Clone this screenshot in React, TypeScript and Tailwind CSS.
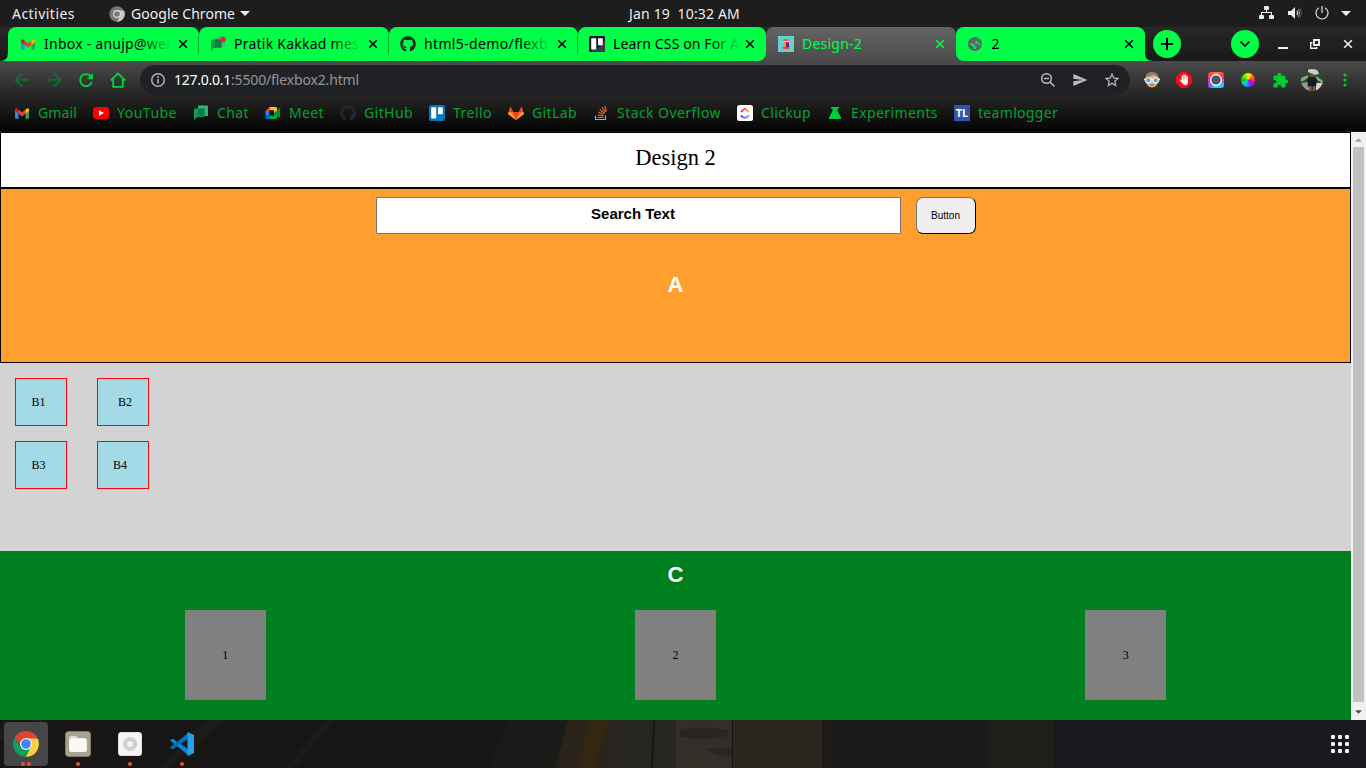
import { useLayoutEffect, useRef, useState, type ReactNode } from 'react';
import { FaGithub } from 'react-icons/fa';
import { MdExtension, MdSend, MdStarBorder } from 'react-icons/md';

/* Text tracked to occupy a given width. */
function Fit({ width, className = '', children }: { width: number; className?: string; children: string }) {
  const ref = useRef<HTMLSpanElement>(null);
  const [spacing, setSpacing] = useState(0);
  useLayoutEffect(() => {
    if (ref.current) {
      const natural = ref.current.getBoundingClientRect().width;
      setSpacing((width - natural) / children.length);
    }
  }, [width, children]);
  return (
    <span ref={ref} className={`inline-block whitespace-pre ${className}`} style={{ letterSpacing: `${spacing}px` }}>
      {children}
    </span>
  );
}

function GmailIcon() {
  return (
    <svg viewBox="0 0 16 16" className="h-4 w-4 shrink-0">
      <path d="M1 4.500v8q0 1.300 1.200 1.300h2.300V6z" fill="#2d8cf0" />
      <path d="M15 4.500v8q0 1.300-1.200 1.300h-2.300V6z" fill="#2ba84f" />
      <path d="M4.300 4.500L8 7.300l3.700-2.800v4L8 11.400 4.300 8.500z" fill="#ea3d34" />
      <path d="M11.500 4.600l1-.8Q15 2.300 15 4.800v1.300l-3.500 2.700z" fill="#fbbc04" />
      <path d="M4.500 4.600l-1-.8Q1 2.300 1 4.800v1.300l3.500 2.700z" fill="#c5221f" />
    </svg>
  );
}
function ChatIcon({ dot = false }: { dot?: boolean }) {
  return (
    <svg viewBox="0 0 16 16" className="h-4 w-4 shrink-0 overflow-visible">
      <path d="M5 .5h9q1 0 1 1v9.500H5z" fill={dot ? '#35c96a' : '#2fb574'} />
      <path d="M2 3.500h9.500V12H4l-3 3.500V4.500q0-1 1-1z" fill="#0b9d58" />
      <path d="M5 3.500h6.500V11H5z" fill="#087d42" />
      {dot && <circle cx="13" cy="3.500" r="2.800" fill="#f51b36" />}
    </svg>
  );
}
function MeetIcon() {
  return (
    <svg viewBox="0 0 16 16" className="h-4 w-4 shrink-0">
      <path d="M.5 6h4v4h-4z" fill="#2684fc" />
      <path d="M.5 10h4v4h-3q-1 0-1-1z" fill="#0066da" />
      <path d="M4.500 2v4h-4z" fill="#ea4335" />
      <path d="M4.500 2H11q1 0 1 1v5H9V5.500H4.500z" fill="#ffba1a" />
      <path d="M4.500 10.500H9V8h3v5q0 1-1 1H4.500z" fill="#00ac47" />
      <path d="M9 8l5-4.500q1.200-.6 1.200.500v8q0 1-1.200.500z" fill="#00932d" />
      <path d="M4.500 5.500H9v5H4.500z" fill="#101010" />
    </svg>
  );
}
function TrelloIcon({ dark = false }: { dark?: boolean }) {
  return (
    <svg viewBox="0 0 16 16" className="h-4 w-4 shrink-0">
      <rect width="16" height="16" rx={dark ? 1 : 2} fill={dark ? '#15192d' : '#0079bf'} />
      {dark && <path d="M9 12l3-3 4-5v12H3v-3z" fill="#3b3c43" />}
      <rect x="2.200" y="2.200" width="5" height="11.300" rx=".8" fill="#fff" />
      <rect x="9" y="2.200" width="4.800" height="7" rx=".8" fill="#fff" />
    </svg>
  );
}
function GitLabIcon() {
  return (
    <svg viewBox="0 0 16 16" className="h-4 w-4 shrink-0">
      <path d="M0 9l2.500-7.500L5 7h6l2.500-5.500L16 9l-8 6z" fill="#fc6d26" />
      <path d="M5 7h6l-3 8z" fill="#e24329" />
      <path d="M0 9l1.200-3L8 15zM16 9l-1.200-3L8 15z" fill="#fca326" />
      <path d="M2.500 1.500L5 7H.8zM13.500 1.500L11 7h4.200z" fill="#e24329" />
    </svg>
  );
}
function StackIcon() {
  return (
    <svg viewBox="0 0 16 16" className="h-4 w-4 shrink-0" fill="none" strokeWidth="1.200">
      <path d="M2.500 10.500v4h10v-4" stroke="#a5a7aa" />
      <path d="M4.500 12.500h6M4.600 10l6 .9M5.300 7.300l5.700 2M6.700 4.400l5 3.500M9 2l3.500 5M12 .8l1.300 5.500" stroke="#e8701f" />
    </svg>
  );
}
function ClickupIcon() {
  return (
    <svg viewBox="0 0 16 16" className="h-4 w-4 shrink-0" fill="none">
      <defs>
        <linearGradient id="cuA"><stop stopColor="#ff02f0" /><stop offset="1" stopColor="#ffc800" /></linearGradient>
        <linearGradient id="cuB"><stop stopColor="#8930fd" /><stop offset="1" stopColor="#49ccf9" /></linearGradient>
      </defs>
      <rect width="16" height="16" rx="2.500" fill="#fff" />
      <path d="M4 7l4-3.500L12 7" stroke="url(#cuA)" strokeWidth="2" />
      <path d="M3.700 10.300q4.300 5 8.600 0" stroke="url(#cuB)" strokeWidth="2" />
    </svg>
  );
}
function DesignIcon() {
  return (
    <svg viewBox="0 0 16 16" className="h-4 w-4 shrink-0">
      <path d="M0 0h16v16H0z" fill="#65d2c9" />
      <path d="M5 3h6v2H5z" fill="#f45b69" />
      <path d="M5 5h3v1H5z" fill="#ffc2b4" /><path d="M8 5h3v1H8z" fill="#ffdcc4" />
      <path d="M5 6h3v5H5z" fill="#ff8c42" /><path d="M8 6h3v2H8z" fill="#b8216c" /><path d="M8 8h3v3H8z" fill="#73166c" />
      <path d="M5 11h6v2H5z" fill="#e63d63" />
    </svg>
  );
}
function GlobeIcon() {
  return (
    <svg viewBox="0 0 16 16" className="h-4 w-4 shrink-0">
      <circle cx="7" cy="8" r="7" fill="#5f6368" />
      <path d="M2.300 7.200h2.500l2.200 2v1.300h1.800l-1 2.300q-1.600.5-2.500-.2V10.500L2.100 8.500zM7.500 2.500l3 .8-.6 1.700-2.200.3-.8 1.900 2.900.6 2.700 2.200.2-2.200-2-.6-1.200-1.300 1-1.500-1.500-2z" fill="#00f045" />
    </svg>
  );
}
function Cross({ className = '' }: { className?: string }) {
  return (
    <svg viewBox="0 0 10 10" className={`h-2.5 w-2.5 shrink-0 ${className}`} fill="none" stroke="currentColor" strokeWidth="1.600">
      <path d="M1.200 1.200l7.600 7.600M8.800 1.200l-7.600 7.600" />
    </svg>
  );
}

interface TabProps { icon: ReactNode; title: string; width: number; box: string; sep?: boolean; shape?: string; pad?: string; children?: ReactNode }
function Tab({ icon, title, width, box, sep, shape = 'rounded-t-lg', pad = 'pl-3', children }: TabProps) {
  return (
    <div className={`relative flex h-[34px] shrink-0 ${box}`}>
      {children}
      <div className={`relative flex w-full items-center bg-[#00ff47] text-black ${pad} ${shape}`}>
        {icon}
        <div className="relative ml-2 w-[128px] text-[14px] leading-5">
          <Fit width={width}>{title}</Fit>
          {title.length > 3 && <span className="absolute inset-y-0 right-0 w-8 bg-linear-to-r from-transparent to-[#00ff47]" />}
        </div>
        <Cross className="absolute right-[11px]" />
        {sep && <span className="absolute right-0 bottom-[6px] h-[20px] w-px bg-[#06a535]" />}
      </div>
    </div>
  );
}

function Bookmark({ icon, label, width, box }: { icon: ReactNode; label: string; width: number; box: string }) {
  return (
    <div className={`flex shrink-0 items-center gap-2 ${box}`}>
      {icon}
      <Fit width={width}>{label}</Fit>
    </div>
  );
}

function TopBar() {
  return (
    <header className="flex h-[27px] items-center bg-[#1d1d1d] text-[14px] leading-5 text-[#eee]">
      <div className="w-[109px] pl-3"><Fit width={63}>Activities</Fit></div>
      <svg viewBox="0 0 16 16" className="mr-[6px] h-4 w-4">
        <circle cx="8" cy="8" r="7.700" fill="#777" />
        <path d="M8 4.500h7A7.700 7.700 0 0 1 8 15.700L11 10z" fill="#c7c7c7" />
        <circle cx="8" cy="8" r="4" fill="#ddd" /><circle cx="8" cy="8" r="2.800" fill="#777" />
      </svg>
      <Fit width={104}>Google Chrome</Fit>
      <svg viewBox="0 0 10 5" className="ml-[5px] h-[5px] w-[10px]"><path d="M0 0h10L5 5z" fill="#eee" /></svg>
      <div className="ml-[378px] w-[631px] pl-px"><Fit width={111}>{'Jan 19  10:32 AM'}</Fit></div>
      <svg viewBox="0 0 16 14" className="-mt-px h-[14px] w-4 shrink-0" fill="#eee">
        <rect x="5" y="0" width="5" height="4" rx="1" /><rect x="0" y="9" width="5" height="4" rx="1" /><rect x="10" y="9" width="5" height="4" rx="1" />
        <path d="M7 4h1v2h5v3h-1V7H3v2H2V6h5z" />
      </svg>
      <svg viewBox="0 0 16 14" className="ml-[13px] -mt-px h-[14px] w-4 shrink-0" fill="none">
        <path d="M0 5h3l4-4v12L3 9H0z" fill="#eee" />
        <path d="M9 5q1.500 2 0 4" stroke="#ddd" strokeWidth="1.300" /><path d="M10.500 3q2.500 4 0 8" stroke="#999" /><path d="M12 1.500q3 5.500 0 11" stroke="#555" />
      </svg>
      <svg viewBox="0 0 14 14" className="ml-[11px] -mt-px h-[14px] w-[14px] shrink-0" fill="none" stroke="#ddd" strokeWidth="1.200">
        <path d="M4 1.800a6 6 0 1 0 6 0M7 0v7" />
      </svg>
      <svg viewBox="0 0 10 5" className="ml-3 h-[5px] w-[10px] shrink-0"><path d="M0 0h10L5 5z" fill="#eee" /></svg>
    </header>
  );
}

function TabStrip() {
  return (
    <div className="flex h-[34px] items-center bg-linear-to-b from-[#282828] to-[#191919]">
      <svg viewBox="0 0 8 34" className="h-[34px] w-2 shrink-0"><path d="M0 34q8 0 8-8v8z" fill="#00ff47" /></svg>
      <Tab box="w-[191px]" icon={<GmailIcon />} title="Inbox - anujp@wel" width={126} sep />
      <Tab box="w-[190px]" pad="pl-[11px]" icon={<ChatIcon dot />} title="Pratik Kakkad mes" width={125} sep />
      <Tab box="w-[189px]" pad="pl-[11px]" icon={<FaGithub className="h-4 w-4 shrink-0 text-[#24292e]" />} title="html5-demo/flexb" width={124} sep />
      <Tab box="w-[188px]" pad="pl-[11px]" icon={<TrelloIcon dark />} title="Learn CSS on For A" width={126} shape="rounded-t-lg rounded-br-lg">
        <span className="absolute right-0 bottom-0 h-2 w-2 bg-[#4c4c4c]" />
      </Tab>
      <div className="relative flex h-[34px] w-[190px] shrink-0 items-center rounded-t-lg bg-linear-to-b from-[#646464] to-[#4c4c4c] pl-3 text-[14px] text-[#00ff47]">
        <DesignIcon />
        <div className="ml-2 leading-5"><Fit width={60}>Design-2</Fit></div>
        <Cross className="absolute right-[11px]" />
      </div>
      <Tab box="w-[189px]" pad="pl-[11.500px]" icon={<GlobeIcon />} title="2" width={8} shape="rounded-t-lg rounded-bl-lg">
        <span className="absolute bottom-0 left-0 h-2 w-2 bg-[#4c4c4c]" />
      </Tab>
      <svg viewBox="0 0 8 34" className="h-[34px] w-2 shrink-0"><path d="M8 34q-8 0-8-8v8z" fill="#00ff47" /></svg>
      <div className="grid h-7 w-7 shrink-0 place-items-center rounded-full bg-[#00ff47]">
        <svg viewBox="0 0 12 12" className="h-3 w-3" stroke="#000" strokeWidth="2"><path d="M6 0v12M0 6h12" /></svg>
      </div>
      <div className="ml-[50px] grid h-7 w-7 shrink-0 place-items-center rounded-full bg-[#00ff47]">
        <svg viewBox="0 0 10 6" className="h-[6px] w-[10px]" fill="none" stroke="#000" strokeWidth="1.600"><path d="M.6.6L5 5 9.400.6" /></svg>
      </div>
      <span className="mt-[8px] ml-[19px] h-[2px] w-[10px] bg-[#eee]" />
      <svg viewBox="0 0 10 10" className="ml-[22px] h-[10px] w-[10px]" fill="none" stroke="#eee">
        <path d="M4 1h5v5H4z" strokeWidth="1.900" /><path d="M2.500 3.700H.7v5.600h6V8" strokeWidth="1.400" />
      </svg>
      <Cross className="ml-[23px] text-[#f2f2f2]" />
    </div>
  );
}

function Toolbar() {
  return (
    <div className="flex h-[38px] items-center text-[#00d33b]">
      <svg viewBox="0 0 16 16" className="ml-[14px] h-4 w-4 shrink-0" fill="none" stroke="#087b2a" strokeWidth="1.600"><path d="M15 8H2M8 1.500L1.500 8 8 14.500" /></svg>
      <svg viewBox="0 0 16 16" className="ml-4 h-4 w-4 shrink-0" fill="none" stroke="#087b2a" strokeWidth="1.600"><path d="M1 8h13M8 1.500L14.500 8 8 14.500" /></svg>
      <svg viewBox="0 0 16 16" className="ml-4 h-4 w-4 shrink-0" fill="none" stroke="currentColor" strokeWidth="1.900"><path d="M12.500 4A6 6 0 1 0 13.800 10" /><path d="M15 1v6H9z" fill="currentColor" stroke="none" /></svg>
      <svg viewBox="0 0 16 16" className="ml-4 h-4 w-4 shrink-0" fill="none" stroke="currentColor" strokeWidth="1.800"><path d="M.8 8.500L8 1.500l7.200 7M3.200 7v7.800h9.600V7" /></svg>
      <div className="ml-[14px] flex h-[30px] w-[990px] shrink-0 items-center rounded-full bg-[#202124] pr-[9px] pl-[10px]">
        <svg viewBox="0 0 16 16" className="h-4 w-4 shrink-0" fill="none" stroke="#b0b3b8" strokeWidth="1.500"><circle cx="8" cy="8" r="6.300" /><path d="M8 7v4.500M8 4.300v1.600" strokeWidth="1.600" /></svg>
        <div className="ml-2 w-[850px] text-[14px] leading-5">
          <Fit width={57} className="text-white">127.0.0.1</Fit>
          <Fit width={128} className="text-[#92969b]">:5500/flexbox2.html</Fit>
        </div>
        <svg viewBox="0 0 16 16" className="ml-[17px] h-4 w-4 shrink-0" fill="none" stroke="#bcbcbc" strokeWidth="1.500">
          <circle cx="6.500" cy="6.500" r="4.800" /><path d="M10 10l4.500 4.500M4 6.500h5" />
        </svg>
        <MdSend className="ml-4 h-4 w-4 shrink-0 text-[#bcbcbc]" />
        <MdStarBorder className="ml-[15px] h-[18px] w-[18px] shrink-0 text-[#bcbcbc]" />
      </div>
      <svg viewBox="0 0 18 16" className="ml-[13px] h-4 w-[18px] shrink-0">
        <path d="M2.500 8q0-7.500 6.500-7.500T15.500 8l-2 5.500q-4.500 4-9 0z" fill="#ddb18e" /><path d="M2.500 6q0-6 6.500-6t6.500 6l-3-2-3-1-3.500 2z" fill="#a77b57" />
        <circle cx="5.300" cy="8.300" r="2.700" fill="#6c9fae" stroke="#d9f2f4" strokeWidth="1.400" /><circle cx="12.700" cy="8.300" r="2.700" fill="#6c9fae" stroke="#d9f2f4" strokeWidth="1.400" />
        <path d="M1 7.500h1.500M8 7.500h2M15.500 7.500H17" stroke="#e8ffff" strokeWidth="1.400" /><path d="M7 13h4" stroke="#a9614f" />
      </svg>
      <svg viewBox="0 0 16 16" className="ml-[15px] h-4 w-4 shrink-0">
        <path d="M5 0h6l5 5v6l-5 5H5l-5-5V5z" fill="#f40d12" />
        <path d="M4.500 8.300l2 2M6.300 9V4M8 8.500V2.800M9.700 8.500V3.500M11.300 9V5" stroke="#fff" strokeWidth="1.400" strokeLinecap="round" fill="none" /><path d="M5.600 8h6.400v2.500q-.5 2.800-3 2.800-1.800 0-3.400-3.300z" fill="#fff" />
      </svg>
      <div className="ml-4 grid h-4 w-4 shrink-0 place-items-center rounded-[3px] bg-[conic-gradient(#ff8a1c,#ff2d56_60deg,#ff31a2_90deg,#20cfff_130deg,#20cfff_190deg,#8256f0_230deg,#ef28cf_270deg,#ff3d46_310deg,#ff8a1c)]">
        <svg viewBox="0 0 14 14" className="h-[14px] w-[14px]"><circle cx="7" cy="7" r="5.300" fill="#343e4c" stroke="#fff" strokeWidth="1.500" /><circle cx="7" cy="7" r="2.700" fill="#3d5366" stroke="#77899a" strokeWidth=".6" /></svg>
      </div>
      <div className="ml-4 grid h-4 w-4 shrink-0 place-items-center">
        <div className="h-[14px] w-[14px] rounded-full bg-[conic-gradient(#ffe100_0_25deg,#ff8a00_40deg,#ff264a_90deg,#d900e5_110deg,#7422ef_150deg,#00baff_200deg,#00e4a2_235deg,#00ca16_270deg,#7be900_320deg,#ffe100)]" />
      </div>
      <MdExtension className="ml-4 h-[17px] w-[17px] shrink-0 text-[#00cb39]" />
      <svg viewBox="0 0 22 22" className="ml-[12px] h-[22px] w-[22px] shrink-0">
        <defs><clipPath id="face"><circle cx="11" cy="11" r="11" /></clipPath></defs>
        <g clipPath="url(#face)">
          <path d="M0 0h22v22H0z" fill="#2c4b2c" /><path d="M7 0h9l2 5-5 1-6-3z" fill="#c8cdca" /><path d="M0 9l7-3v3l-7 4zM15 7l7 5v3l-7-5z" fill="#8ba578" />
          <path d="M0 14l7-1 2 9H0z" fill="#989a91" /><path d="M15 14h7v8h-7z" fill="#d4d4cc" /><path d="M6 10l3-2h4l3 2-1 8H7z" fill="#151c28" />
          <circle cx="11" cy="6.500" r="2" fill="#694a3b" /><path d="M8 17h2.500v5H8zM12 17h2.500v5H12z" fill="#875548" />
        </g>
      </svg>
      <svg viewBox="0 0 4 14" className="ml-[20px] h-[14px] w-1 shrink-0" fill="#00cb39"><circle cx="2" cy="2" r="1.600" /><circle cx="2" cy="7" r="1.600" /><circle cx="2" cy="12" r="1.600" /></svg>
    </div>
  );
}

function Bookmarks() {
  return (
    <div className="flex h-[28px] items-center pl-[14px] text-[14px] leading-5 text-[#04a230]">
      <Bookmark box="w-[79px]" icon={<GmailIcon />} label="Gmail" width={39} />
      <Bookmark box="w-[100px]" icon={<svg viewBox="0 0 16 16" className="h-4 w-4 shrink-0"><rect y="2" width="16" height="12" rx="3" fill="#f00" /><path d="M6 5.300l5 2.700-5 2.700z" fill="#fff" /></svg>} label="YouTube" width={60} />
      <Bookmark box="w-[72px]" icon={<ChatIcon />} label="Chat" width={32} />
      <Bookmark box="w-[75px]" icon={<MeetIcon />} label="Meet" width={35} />
      <Bookmark box="w-[89px]" icon={<FaGithub className="h-4 w-4 shrink-0 text-[#24292e]" />} label="GitHub" width={49} />
      <Bookmark box="w-[79px]" icon={<TrelloIcon />} label="Trello" width={39} />
      <Bookmark box="w-[85px]" icon={<GitLabIcon />} label="GitLab" width={45} />
      <Bookmark box="w-[144px]" icon={<StackIcon />} label="Stack Overflow" width={104} />
      <Bookmark box="w-[90px]" icon={<ClickupIcon />} label="Clickup" width={50} />
      <Bookmark box="w-[127px]" icon={<svg viewBox="0 0 16 16" className="h-4 w-4 shrink-0"><path d="M4 2h8v1.500h-1.500V6l3.500 6.500v1.500H2v-1.500L5.500 6V3.500H4z" fill="#00cb39" /></svg>} label="Experiments" width={87} />
      <Bookmark box="w-[110px]" icon={<span className="grid h-4 w-4 shrink-0 place-items-center bg-[#2d55b1] text-[11px] leading-4 font-bold text-white">TL</span>} label="teamlogger" width={80} />
    </div>
  );
}

function Cell({ label, pad = 'pl-[15.500px]' }: { label: string; pad?: string }) {
  return <div className={`flex h-12 w-[52px] items-center border border-[#ff0010] bg-[#a4dae6] text-[12px] ${pad}`}>{label}</div>;
}

function Page() {
  return (
    <div className="flex h-[588px]">
      <main className="flex w-[1351px] flex-col font-['Liberation_Serif',serif] text-black">
        <h1 className="h-14 border border-black bg-white pt-3 text-center text-[22.5px] leading-[26px]">Design 2</h1>
        <section className="h-[175px] border border-black bg-[#ff9f2f] pt-2 font-['Liberation_Sans',sans-serif]">
          <div className="flex gap-[15px] pl-[375px]">
            <div className="h-[37px] w-[525px] rounded-[1px] border border-[#767676] bg-white pt-[6px] pr-[11px] text-center text-[15px] leading-5 font-bold">Search Text</div>
            <button className="h-[37px] w-[60px] rounded-[7px] border border-t-[#767676] border-r-black border-b-black border-l-[#767676] bg-[#efefef] pr-px text-[10px]">Button</button>
          </div>
          <div className="mt-[38px] text-center text-[22px] leading-[26px] font-bold text-white">A</div>
        </section>
        <section className="h-[188px] bg-[#d3d3d3] pt-[15px] pl-[15px]">
          <div className="grid w-[134px] grid-cols-2 gap-x-[30px] gap-y-[15px]">
            <Cell label="B1" />
            <Cell label="B2" pad="pl-[20px]" />
            <Cell label="B3" />
            <Cell label="B4" pad="pl-[15px]" />
          </div>
        </section>
        <section className="h-[169px] bg-[#00801f] pt-[11px]">
          <div className="text-center font-['Liberation_Sans',sans-serif] text-[22px] leading-[26px] font-bold text-white">C</div>
          <div className="mt-[22px] flex justify-around">
            {['1', '2', '3'].map((n) => (
              <div key={n} className="flex h-[90px] w-[81px] items-center justify-center bg-[#808080] text-[12px]">{n}</div>
            ))}
          </div>
        </section>
      </main>
      <div className="flex w-[15px] flex-col items-center bg-[#f1f1f1]">
        <div className="flex h-[15px] items-center"><svg viewBox="0 0 8 4" className="h-1 w-[7px]"><path d="M0 4h8L4 0z" fill="#a3a3a3" /></svg></div>
        <div className="h-[555px] w-[11px] bg-[#c1c1c1]" />
        <div className="flex h-[18px] items-center"><svg viewBox="0 0 8 4" className="mt-[2px] h-1 w-[7px]"><path d="M0 0h8L4 4z" fill="#505050" /></svg></div>
      </div>
    </div>
  );
}

function DockItem({ children, dots = 1, active = false, gap = '' }: { children: ReactNode; dots?: number; active?: boolean; gap?: string }) {
  return (
    <div className={`flex h-11 w-11 flex-col items-center rounded ${active ? 'bg-[#464646]' : ''} ${gap}`}>
      <div className="mt-2 grid h-7 w-7 place-items-center">{children}</div>
      <div className="mt-1 flex gap-[2px]">
        {Array.from({ length: dots }, (_, i) => <span key={i} className="h-1 w-1 rounded-full bg-[#e95420]" />)}
      </div>
    </div>
  );
}

function Wallpaper() {
  return (
    <svg viewBox="0 0 1366 48" className="absolute inset-0 h-12 w-[1366px]">
      <path d="M0 0h1366v48H0z" fill="#171615" />
      <path d="M0 8L30 0h25L0 20zM160 48L205 0h20l-55 48zM285 48L325 0h10l-40 48z" fill="#1c1b19" />
      <path d="M488 48L508 0h60l-13 48z" fill="#1a1a18" />
      <path d="M568 0h43v48h-56z" fill="#29231a" />
      <path d="M590 0h18l-13 48h-17z" fill="#34270f" />
      <path d="M611 0h65v48h-65z" fill="#282622" />
      <path d="M653 0h2l-2 48h-2z" fill="#181715" />
      <path d="M676 0h56v48h-56z" fill="#312f27" />
      <path d="M680 10q15-5 48 0v6q-25 5-48 1zM705 28h27v10q-20-3-27-10z" fill="#282621" />
      <path d="M733 0h89v48h-89z" fill="#2b2620" />
      <path d="M822 0h9v48h-9z" fill="#1d1c19" />
      <path d="M831 0h157v48H831z" fill="#17191a" />
      <path d="M988 0h66v48h-66z" fill="#201e18" />
      <path d="M1054 0h312v48h-312z" fill="#181a1d" />
    </svg>
  );
}

function Dock() {
  return (
    <footer className="relative h-12">
      <Wallpaper />
      <div className="relative flex items-start pt-[2px] pl-1">
        <DockItem active dots={2}>
          <svg viewBox="0 0 26 26" className="h-[26px] w-[26px]">
            <path d="M13 13L1.740 6.500A13 13 0 0 1 24.260 6.500z" fill="#db4437" />
            <path d="M13 13V7.500H24.700A13 13 0 0 1 13 26z" fill="#ffcd40" />
            <path d="M13 13l4.800 3L13 26A13 13 0 0 1 1.740 6.500L7 15z" fill="#0f9d58" />
            <path d="M1.740 6.500L8 15.500 13 7.500z" fill="#db4437" />
            <circle cx="13" cy="13" r="6" fill="#f1f1f1" /><circle cx="13" cy="13" r="4.800" fill="#4285f4" />
          </svg>
        </DockItem>
        <DockItem gap="ml-2">
          <svg viewBox="0 0 26 26" className="h-[26px] w-[26px]"><rect x=".5" y=".5" width="25" height="25" rx="3" fill="#aaa28e" stroke="#817b6d" /><path d="M4 8q0-3 3-3h4l2 2h6q3 0 3 3v9q0 2-2 2H6q-2 0-2-2z" fill="#e6e2da" /><rect x="4.500" y="7.500" width="17" height="13.500" rx="2.500" fill="#faf9f7" /></svg>
        </DockItem>
        <DockItem gap="ml-2">
          <svg viewBox="0 0 24 24" className="h-6 w-6"><rect x=".5" y=".5" width="23" height="23" rx="2.500" fill="#f5f5f5" stroke="#ddd" /><circle cx="12" cy="12" r="5" fill="none" stroke="#d0d0d0" strokeWidth="2.400" /><circle cx="12" cy="12" r="3.500" fill="none" stroke="#bbb" strokeWidth=".6" /><circle cx="12" cy="12" r="6.500" fill="none" stroke="#bdbdbd" strokeWidth="1.200" strokeDasharray="1.400 1.150" /></svg>
        </DockItem>
        <DockItem gap="ml-2">
          <svg viewBox="0 0 26 26" className="h-[26px] w-[26px]">
            <path d="M1 9.500L3.500 7.500 19 18v6z" fill="#0a84cf" /><path d="M1 16.500l2.500 2L19 8V2z" fill="#0070b8" />
            <path d="M18.500 1l6.500 3v18l-6.500 3z" fill="#24a0ec" />
          </svg>
        </DockItem>
        <div className="mt-[13px] ml-[1127px] grid grid-cols-3 gap-[3px]">
          {Array.from({ length: 9 }, (_, i) => <span key={i} className="h-1 w-1 rounded-[1px] bg-[#eee]" />)}
        </div>
      </div>
    </footer>
  );
}

export default function App() {
  return (
    <div className="flex h-[768px] w-[1366px] flex-col overflow-hidden bg-black font-['Noto_Sans','Open_Sans',sans-serif]">
      <TopBar />
      <TabStrip />
      <div className="h-[71px] border-b border-[#0b2107] bg-linear-to-b from-[#4b4b4b] to-[#060606]">
        <Toolbar />
        <Bookmarks />
      </div>
      <Page />
      <Dock />
    </div>
  );
}
